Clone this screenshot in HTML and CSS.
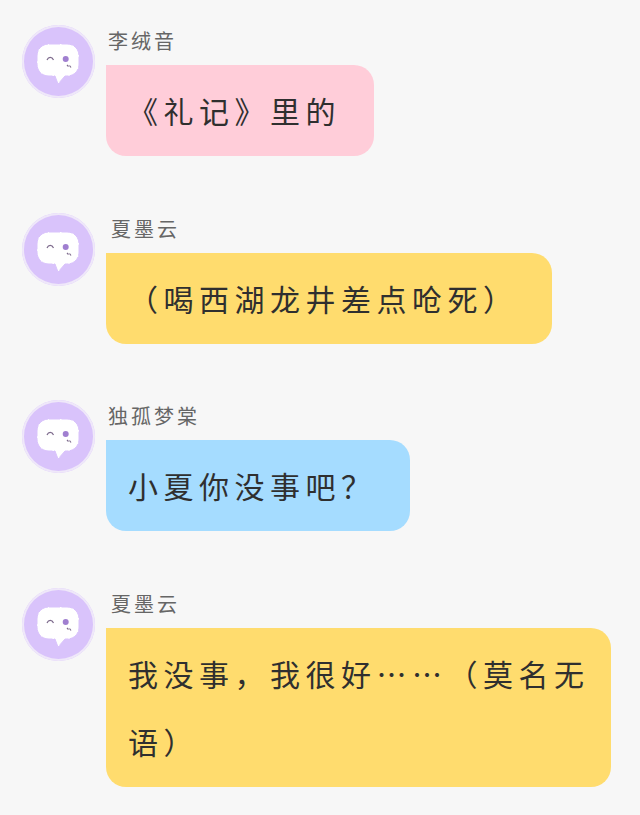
FILE: index.html
```html
<!DOCTYPE html>
<html lang="zh-CN">
<head>
<meta charset="UTF-8" />
<title>Chat</title>
<link rel="stylesheet" href="styles.css">
</head>
<body>
<svg class="icon-defs" width="0" height="0">
  <symbol id="chatFace" viewBox="0 0 73 73">
    <path d="M27 19H45C52 19 57 24 57 31V39C57 46 52 51 45 51H43L36 59L33 51H27C20 51 15 46 15 39V31C15 24 20 19 27 19Z" fill="#fff"/>
    <path d="M27 19H45C52 19 57 24 57 31V39C57 46 52 51 45 51H43L36 59L33 51H27C20 51 15 46 15 39V31C15 24 20 19 27 19Z" fill="none" stroke="#d9c3fb" stroke-width="1" stroke-dasharray="11 1.500"/>
    <path d="M25 35C26.500 31.500 30 31.500 31.500 35" fill="none" stroke="#7d6a8c" stroke-width="1.200"/>
    <circle cx="43.700" cy="34" r="3" fill="#a07fd0"/>
    <path d="M45 40L46.500 41.500M47.500 40.500L49 42.500" stroke="#7d6a8c" stroke-width="1.200"/>
  </symbol>
</svg>
<div class="chat">
  <div class="message">
    <svg class="avatar"><use href="#chatFace"/></svg>
    <div class="content">
      <div class="name">李绒音</div>
      <div class="bubble pink">《礼记》里的</div>
    </div>
  </div>
  <div class="message">
    <svg class="avatar"><use href="#chatFace"/></svg>
    <div class="content">
      <div class="name indent">夏墨云</div>
      <div class="bubble yellow">（喝西湖龙井差点呛死）</div>
    </div>
  </div>
  <div class="message">
    <svg class="avatar"><use href="#chatFace"/></svg>
    <div class="content">
      <div class="name">独孤梦棠</div>
      <div class="bubble blue">小夏你没事吧？</div>
    </div>
  </div>
  <div class="message">
    <svg class="avatar"><use href="#chatFace"/></svg>
    <div class="content">
      <div class="name indent">夏墨云</div>
      <div class="bubble yellow wide">我没事，我很好……（莫名无语）</div>
    </div>
  </div>
</div>
</body>
</html>
```
FILE: styles.css
```css
* { box-sizing: border-box; }
body {
  margin: 0;
  background: #f7f7f7;
  font-family: "Noto Sans CJK SC", "Noto Sans", sans-serif;
  color: #2f2f2f;
}
.icon-defs {
  display: block;
}
.chat {
  display: flex;
  flex-direction: column;
  gap: 56.5px;
  padding: 25px 0 0 22px;
}
.message {
  display: flex;
  gap: 11px;
}
.avatar {
  flex: none;
  width: 73px;
  height: 73px;
  border-radius: 50%;
  background: #d9c3fb;
  box-shadow: inset 0 0 0 2px #efe8f9;
}
.content {
  display: flex;
  flex-direction: column;
  align-items: flex-start;
}
.name {
  height: 40px;
  padding-left: 2px;
  font-size: 20px;
  font-weight: 400;
  line-height: 32px;
  letter-spacing: 3px;
  color: #666;
}
.name.indent {
  padding-left: 5px;
}
.bubble {
  padding: 11px 33px 12px 22px;
  border-radius: 0 20px 20px 20px;
  font-size: 30px;
  font-weight: 400;
  line-height: 68px;
  letter-spacing: 5.5px;
}
.bubble.wide {
  width: 505px;
  padding-right: 21px;
}
.pink { background: #ffcdd9; }
.yellow { background: #ffdc6e; }
.blue { background: #a5dcff; }
```
